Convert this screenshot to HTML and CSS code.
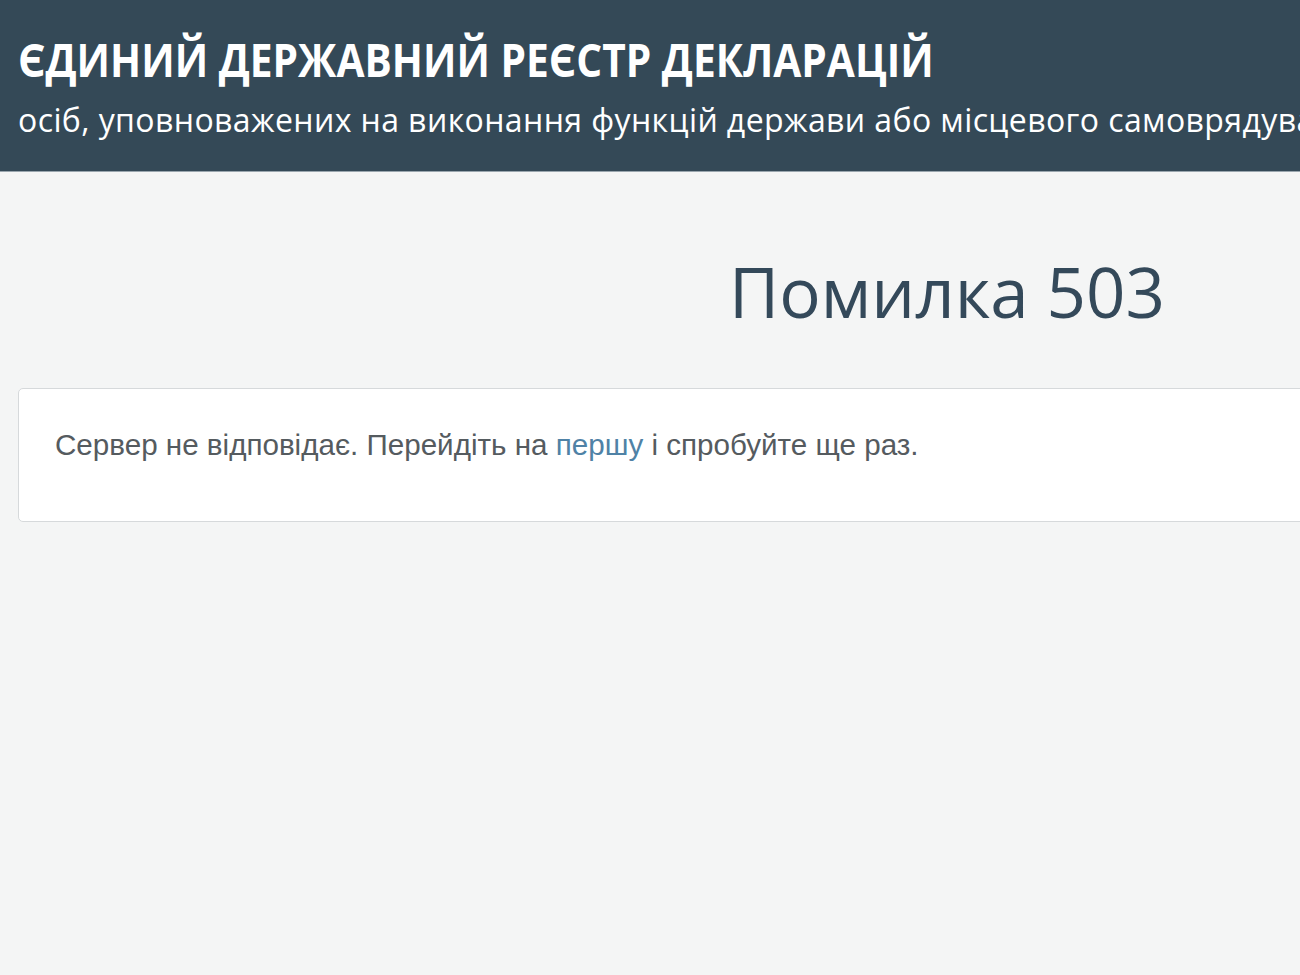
FILE: index.html
```html
<!DOCTYPE html>
<html lang="uk">
<head>
<meta charset="utf-8">
<title>Помилка 503</title>
<link rel="stylesheet" href="styles.css">
</head>
<body>
<header class="site-header">
  <h1 class="site-title">ЄДИНИЙ ДЕРЖАВНИЙ РЕЄСТР ДЕКЛАРАЦІЙ</h1>
  <p class="site-subtitle">осіб, уповноважених на виконання функцій держави або місцевого самоврядування</p>
</header>
<main class="content">
  <h2 class="error-title">Помилка 503</h2>
  <div class="panel">
    <p class="panel-text">Сервер не відповідає. Перейдіть на <a class="link" href="#">першу</a> і спробуйте ще раз.</p>
  </div>
</main>
</body>
</html>
```

FILE: styles.css
```css
html, body {
  margin: 0;
  padding: 0;
  background: #f4f5f5;
  overflow: hidden;
}
.site-header {
  background: #344957;
  color: #ffffff;
  height: 172px;
  box-sizing: border-box;
  padding: 30px 0 0 18px;
  border-bottom: 1px solid #9aa6ae;
  white-space: nowrap;
  overflow: hidden;
  font-family: "Open Sans", "Noto Sans", sans-serif;
}
.site-title {
  margin: 0;
  font-size: 46px;
  font-weight: 700;
  line-height: 58px;
  transform: scaleX(0.884);
  transform-origin: left center;
}
.site-subtitle {
  margin: 12px 0 0;
  font-size: 32px;
  font-weight: 400;
  line-height: 40px;
  letter-spacing: 0.4px;
}
.content {
  padding: 0 0 0 18px;
}
.error-title {
  margin: 0;
  padding: 69px 0 0 711px;
  font-family: "Open Sans", "Noto Sans", sans-serif;
  font-weight: 400;
  font-size: 69px;
  line-height: 100px;
  color: #34495a;
  white-space: nowrap;
}
.panel {
  margin-top: 47px;
  width: 1400px;
  height: 134px;
  box-sizing: border-box;
  background: #ffffff;
  border: 1px solid #d6d9db;
  border-radius: 5px;
  padding: 39px 0 0 36px;
}
.panel-text {
  margin: 0;
  font-family: "Liberation Sans", Arial, sans-serif;
  font-size: 29.6px;
  line-height: normal;
  color: #555b5f;
  white-space: nowrap;
}
.link {
  color: #4f82a6;
  text-decoration: none;
}
```
